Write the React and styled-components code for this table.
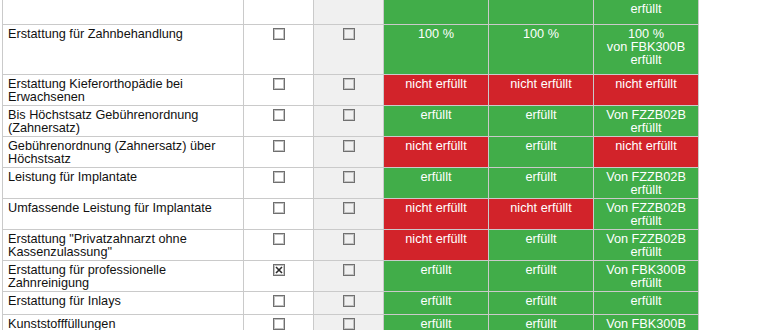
import React from 'react'
import styled, { createGlobalStyle } from 'styled-components'

const GlobalStyle = createGlobalStyle`
  html, body {
    margin: 0;
    padding: 0;
    background: #fff;
  }
  body {
    font-family: 'Liberation Sans', Arial, sans-serif;
  }
`

// the first row is scrolled half out of view: only its last line shows
const rows = [
  {
    label: '',
    checks: [],
    cells: [
      ['ok', ''],
      ['ok', ''],
      ['ok', 'erfüllt'],
    ],
    h: 24,
    cut: true,
  },
  {
    label: 'Erstattung für Zahnbehandlung',
    checks: [false, false],
    cells: [
      ['ok', '100 %'],
      ['ok', '100 %'],
      ['ok', '100 %\nvon FBK300B\nerfüllt'],
    ],
    h: 49,
  },
  {
    label: 'Erstattung Kieferorthopädie bei\nErwachsenen',
    checks: [false, false],
    cells: [
      ['no', 'nicht erfüllt'],
      ['no', 'nicht erfüllt'],
      ['no', 'nicht erfüllt'],
    ],
  },
  {
    label: 'Bis Höchstsatz Gebührenordnung\n(Zahnersatz)',
    checks: [false, false],
    cells: [
      ['ok', 'erfüllt'],
      ['ok', 'erfüllt'],
      ['ok', 'Von FZZB02B\nerfüllt'],
    ],
  },
  {
    label: 'Gebührenordnung (Zahnersatz) über\nHöchstsatz',
    checks: [false, false],
    cells: [
      ['no', 'nicht erfüllt'],
      ['ok', 'erfüllt'],
      ['no', 'nicht erfüllt'],
    ],
  },
  {
    label: 'Leistung für Implantate',
    checks: [false, false],
    cells: [
      ['ok', 'erfüllt'],
      ['ok', 'erfüllt'],
      ['ok', 'Von FZZB02B\nerfüllt'],
    ],
  },
  {
    label: 'Umfassende Leistung für Implantate',
    checks: [false, false],
    cells: [
      ['no', 'nicht erfüllt'],
      ['no', 'nicht erfüllt'],
      ['ok', 'Von FZZB02B\nerfüllt'],
    ],
  },
  {
    label: 'Erstattung "Privatzahnarzt ohne\nKassenzulassung"',
    checks: [false, false],
    cells: [
      ['no', 'nicht erfüllt'],
      ['ok', 'erfüllt'],
      ['ok', 'Von FZZB02B\nerfüllt'],
    ],
  },
  {
    label: 'Erstattung für professionelle\nZahnreinigung',
    checks: [true, false],
    cells: [
      ['ok', 'erfüllt'],
      ['ok', 'erfüllt'],
      ['ok', 'Von FBK300B\nerfüllt'],
    ],
  },
  {
    label: 'Erstattung für Inlays',
    checks: [false, false],
    cells: [
      ['ok', 'erfüllt'],
      ['ok', 'erfüllt'],
      ['ok', 'erfüllt'],
    ],
    h: 22,
  },
  {
    label: 'Kunststofffüllungen',
    checks: [false, false],
    cells: [
      ['ok', 'erfüllt'],
      ['ok', 'erfüllt'],
      ['ok', 'Von FBK300B'],
    ],
  },
]

const Checkbox = ({ checked }) => (
  <Box>
    {checked && (
      <svg width="10" height="10" viewBox="0 0 10 10">
        <path d="M2 2 L8 8 M8 2 L2 8" stroke="#2b2b2b" strokeWidth="1.6" />
      </svg>
    )}
  </Box>
)

export default function App() {
  return (
    <>
      <GlobalStyle />
      <Viewport>
        <Table>
          {rows.map((row, i) => (
            <Row key={i} $h={row.h || 30} $cut={row.cut}>
              <LabelCell>{row.label}</LabelCell>
              {[0, 1].map((j) => (
                <CheckCell key={j} $shaded={j === 1}>
                  {row.checks.length > 0 && <Checkbox checked={row.checks[j]} />}
                </CheckCell>
              ))}
              {row.cells.map(([status, text], j) => (
                <StatusCell key={j} $ok={status === 'ok'}>
                  {text}
                </StatusCell>
              ))}
            </Row>
          ))}
        </Table>
      </Viewport>
    </>
  )
}

const Viewport = styled.div`
  height: 330px;
  overflow: hidden;
  padding-left: 2px;
`

const Table = styled.div`
  display: grid;
  grid-template-columns: 240px 69px 69px 104px 104px 104px;
  gap: 1px;
  width: max-content;
  margin-top: -1px;
  background: #cacaca;
  border: 1px solid #cacaca;
  font-size: 12.7px;
  line-height: 13px;
`

const Row = styled.div`
  display: contents;

  & > * {
    min-height: ${({ $h }) => $h}px;
    ${({ $cut }) => ($cut ? 'padding-top: 0;' : '')}
  }
`

const Cell = styled.div`
  box-sizing: border-box;
  padding: 3px 5px 1px;
  white-space: pre-line;
`

const LabelCell = styled(Cell)`
  background: #fff;
  color: #111;
  text-align: left;
`

const CheckCell = styled(Cell)`
  display: flex;
  justify-content: center;
  align-items: flex-start;
  background: ${({ $shaded }) => ($shaded ? '#f0f0f0' : '#fff')};
`

const StatusCell = styled(Cell)`
  background: ${({ $ok }) => ($ok ? '#41ad49' : '#d2232a')};
  color: #fff;
  text-align: center;
`

const Box = styled.span`
  display: flex;
  align-items: center;
  justify-content: center;
  box-sizing: border-box;
  width: 12px;
  height: 12px;
  border: 1px solid #707070;
  box-shadow: inset 0 0 0 1px #c2c2c2;
`
